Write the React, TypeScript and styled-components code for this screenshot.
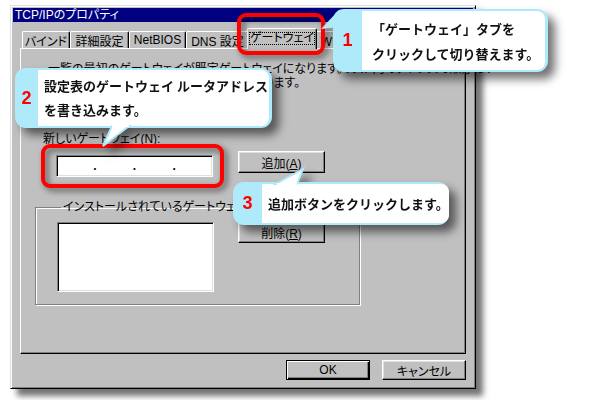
import React from 'react';
import styled, { createGlobalStyle } from 'styled-components';

const CYAN = '#aeeafa';
const RED = '#ff0000';
const FACE = '#c0c0c0';

const GlobalStyle = createGlobalStyle`
  html, body {
    margin: 0;
    padding: 0;
    background: #ffffff;
  }
  body {
    font-family: 'Liberation Sans', 'Noto Sans CJK JP', sans-serif;
  }
`;

const Stage = styled.div`
  position: relative;
  width: 600px;
  height: 400px;
  box-sizing: border-box;
  padding: 5px 0 0 10px;
  overflow: hidden;
`;

const Window = styled.div`
  isolation: isolate;
  width: 466px;
  height: 384px;
  box-sizing: border-box;
  padding: 2px;
  display: flex;
  flex-direction: column;
  background: ${FACE};
  border: 1px solid;
  border-color: #dfdfdf #000 #000 #dfdfdf;
  box-shadow: inset 1px 1px #fff, inset -1px -1px #808080, 7px 7px 6px rgba(0, 0, 0, 0.55);
  font-size: 12px;
  color: #000;
  font-feature-settings: 'palt';
`;

const TitleBar = styled.div`
  height: 14px;
  line-height: 14px;
  padding-left: 2px;
  background: #000080;
  color: #fff;
  white-space: nowrap;
`;

const TabStrip = styled.div`
  position: relative;
  z-index: 1;
  display: flex;
  align-items: flex-end;
  height: 20px;
  margin: 6px 7px 0;
  padding-left: 2px;
`;

const Tab = styled.div<{ $w: number; $active?: boolean }>`
  box-sizing: border-box;
  flex-shrink: 0;
  width: ${(p) => p.$w}px;
  height: ${(p) => (p.$active ? 21 : 17)}px;
  margin: 0 ${(p) => (p.$active ? -2 : 0)}px ${(p) => (p.$active ? -1 : 0)}px;
  display: flex;
  align-items: center;
  justify-content: center;
  background: ${FACE};
  border-top: 1px solid #fff;
  border-left: 1px solid #fff;
  border-right: 1px solid #000;
  border-radius: 2px 2px 0 0;
  box-shadow: inset -1px 0 #808080;
  white-space: nowrap;
  position: relative;
  z-index: ${(p) => (p.$active ? 2 : 0)};
`;

const FocusLabel = styled.span`
  flex: 1;
  margin: 0 2px 1px;
  border: 1px dotted #000;
  line-height: 11px;
  text-align: center;
`;

const Panel = styled.div`
  box-sizing: border-box;
  height: 306px;
  margin: 0 7px;
  border: 1px solid;
  border-color: #fff #000 #000 #fff;
  box-shadow: inset -1px -1px #808080;
`;

const Description = styled.p`
  margin: 13px 0 0 27px;
  line-height: 14px;
  white-space: nowrap;
`;

const FieldLabel = styled.div`
  margin: 42px 0 0 22px;
  line-height: 14px;
`;

const EntryRow = styled.div`
  display: flex;
  align-items: flex-start;
  margin: 5px 0 0 35px;
`;

const Sunken = styled.div<{ $w: number; $h: number }>`
  box-sizing: border-box;
  flex-shrink: 0;
  width: ${(p) => p.$w}px;
  height: ${(p) => p.$h}px;
  background: #fff;
  border: 1px solid;
  border-color: #808080 #fff #fff #808080;
  box-shadow: inset 1px 1px #000, inset -1px -1px #dfdfdf;
`;

const AddressField = styled(Sunken)`
  margin-top: 4px;
  display: grid;
  grid-template-columns: 1fr auto 1fr auto 1fr auto 1fr;
  align-items: center;
  line-height: 20px;
  font-weight: 700;
`;

const PushButton = styled.button<{ $w: number; $h: number; $default?: boolean; $gap?: number }>`
  box-sizing: border-box;
  flex-shrink: 0;
  width: ${(p) => p.$w}px;
  height: ${(p) => p.$h}px;
  margin-left: ${(p) => p.$gap ?? 0}px;
  padding: 0;
  font-family: inherit;
  font-size: 12px;
  font-feature-settings: 'palt';
  color: #000;
  background: ${FACE};
  border: 1px solid;
  border-color: ${(p) => (p.$default ? '#000' : '#fff #000 #000 #fff')};
  box-shadow: ${(p) =>
    p.$default
      ? 'inset 1px 1px #fff, inset -1px -1px #000, inset -2px -2px #808080'
      : 'inset -1px -1px #808080, inset 1px 1px #dfdfdf'};
`;

const Group = styled.fieldset`
  width: 325px;
  box-sizing: border-box;
  margin: 23px 0 0 14px;
  padding: 0 0 12px 21px;
  border: 1px solid #808080;
  box-shadow: inset 1px 1px #fff, 1px 1px #fff;
  min-width: 0;
`;

const GroupLegend = styled.legend`
  margin-left: 4px;
  padding: 0 2px;
  line-height: 14px;
`;

const GroupBody = styled.div`
  display: flex;
  align-items: flex-start;
  margin-top: 8px;
`;

const DialogButtons = styled.div`
  display: flex;
  justify-content: flex-end;
  gap: 12px;
  margin: 6px 7px 0;
`;

const Highlight = styled.div<{ $x: number; $y: number; $w: number; $h: number }>`
  position: absolute;
  left: ${(p) => p.$x}px;
  top: ${(p) => p.$y}px;
  width: ${(p) => p.$w}px;
  height: ${(p) => p.$h}px;
  box-sizing: border-box;
  border: 4px solid ${RED};
  border-radius: 9px;
  filter: drop-shadow(3px 3px 3px rgba(0, 0, 0, 0.6));
`;

const Callout = styled.div<{ $x: number; $y: number; $w: number; $h: number }>`
  position: absolute;
  left: ${(p) => p.$x}px;
  top: ${(p) => p.$y}px;
  width: ${(p) => p.$w}px;
  height: ${(p) => p.$h}px;
  display: flex;
  background: ${CYAN};
  border-radius: 11px;
  filter: drop-shadow(7px 7px 5px rgba(0, 0, 0, 0.55));
  font-family: 'Noto Sans CJK JP', sans-serif;
`;

const CalloutNumber = styled.div<{ $w: number }>`
  flex-shrink: 0;
  width: ${(p) => p.$w}px;
  display: flex;
  align-items: center;
  justify-content: center;
  color: ${RED};
  font: 700 18px 'Liberation Sans', sans-serif;
`;

const CalloutBody = styled.div<{ $pad: number; $lh?: number }>`
  flex: 1;
  margin: 2px 3px 2px 0;
  padding-left: ${(p) => p.$pad}px;
  display: flex;
  flex-direction: column;
  justify-content: center;
  background: #fff;
  border-radius: 0 8px 8px 0;
  color: #111;
  font-size: 13px;
  font-weight: 700;
  line-height: ${(p) => p.$lh ?? 25}px;
  white-space: nowrap;
`;

const Tail = styled.svg<{ $x: number; $y: number }>`
  position: absolute;
  left: ${(p) => p.$x}px;
  top: ${(p) => p.$y}px;
  overflow: visible;
`;

export default function App() {
  return (
    <Stage>
      <GlobalStyle />
      <Window>
        <TitleBar>TCP/IPのプロパティ</TitleBar>
        <TabStrip>
          <Tab $w={48}>バインド</Tab>
          <Tab $w={59}>詳細設定</Tab>
          <Tab $w={57}>NetBIOS</Tab>
          <Tab $w={63}>DNS 設定</Tab>
          <Tab $w={70} $active>
            <FocusLabel>ゲートウェイ</FocusLabel>
          </Tab>
          <Tab $w={70}>WINS 設定</Tab>
          <Tab $w={70}>IP アドレス</Tab>
        </TabStrip>
        <Panel>
          <Description>
            一覧の最初のゲートウェイが既定ゲートウェイになります。リスト内のアドレスの順序は、
            <br />
            これらのコンピュータが使われる順序になります。
          </Description>
          <FieldLabel>
            新しいゲートウェイ(<u>N</u>):
          </FieldLabel>
          <EntryRow>
            <AddressField $w={157} $h={22}>
              <span />
              <span>.</span>
              <span />
              <span>.</span>
              <span />
              <span>.</span>
              <span />
            </AddressField>
            <PushButton $w={87} $h={22} $gap={25}>
              追加(<u>A</u>)
            </PushButton>
          </EntryRow>
          <Group>
            <GroupLegend>
              インストールされているゲートウェイ(<u>I</u>)
            </GroupLegend>
            <GroupBody>
              <Sunken $w={157} $h={70} />
              <PushButton $w={87} $h={21} $gap={24}>
                削除(<u>R</u>)
              </PushButton>
            </GroupBody>
          </Group>
        </Panel>
        <DialogButtons>
          <PushButton $w={84} $h={20} $default>
            OK
          </PushButton>
          <PushButton $w={84} $h={20}>
            キャンセル
          </PushButton>
        </DialogButtons>
      </Window>

      <Highlight $x={237} $y={13} $w={88} $h={42} />
      <Highlight $x={41} $y={144} $w={183} $h={44} />

      <Callout $x={333} $y={9} $w={215} $h={63}>
        <Tail $x={-14} $y={0} width={20} height={22}>
          <polygon points="20,1 2,20 20,18" fill={CYAN} />
        </Tail>
        <CalloutNumber $w={29}>1</CalloutNumber>
        <CalloutBody $pad={10}>
          <span>「ゲートウェイ」タブを</span>
          <span>クリックして切り替えます。</span>
        </CalloutBody>
      </Callout>

      <Callout $x={15} $y={68} $w={257} $h={60}>
        <CalloutNumber $w={23}>2</CalloutNumber>
        <CalloutBody $pad={6} $lh={24}>
          <span>設定表のゲートウェイ ルータアドレス</span>
          <span>を書き込みます。</span>
        </CalloutBody>
        <Tail $x={86} $y={54} width={30} height={26}>
          <polygon points="11,4 28,4 2,24" fill="#fff" stroke={CYAN} strokeWidth={2} />
          <rect x={11} y={0} width={17} height={5} fill="#fff" />
        </Tail>
      </Callout>

      <Callout $x={233} $y={182} $w={216} $h={43}>
        <CalloutNumber $w={29}>3</CalloutNumber>
        <CalloutBody $pad={6}>
          <span>追加ボタンをクリックします。</span>
        </CalloutBody>
        <Tail $x={40} $y={-15} width={34} height={20}>
          <polygon points="3,17 24,17 30,2" fill="#fff" stroke={CYAN} strokeWidth={2} />
          <rect x={4} y={16} width={20} height={4} fill="#fff" />
        </Tail>
      </Callout>
    </Stage>
  );
}
